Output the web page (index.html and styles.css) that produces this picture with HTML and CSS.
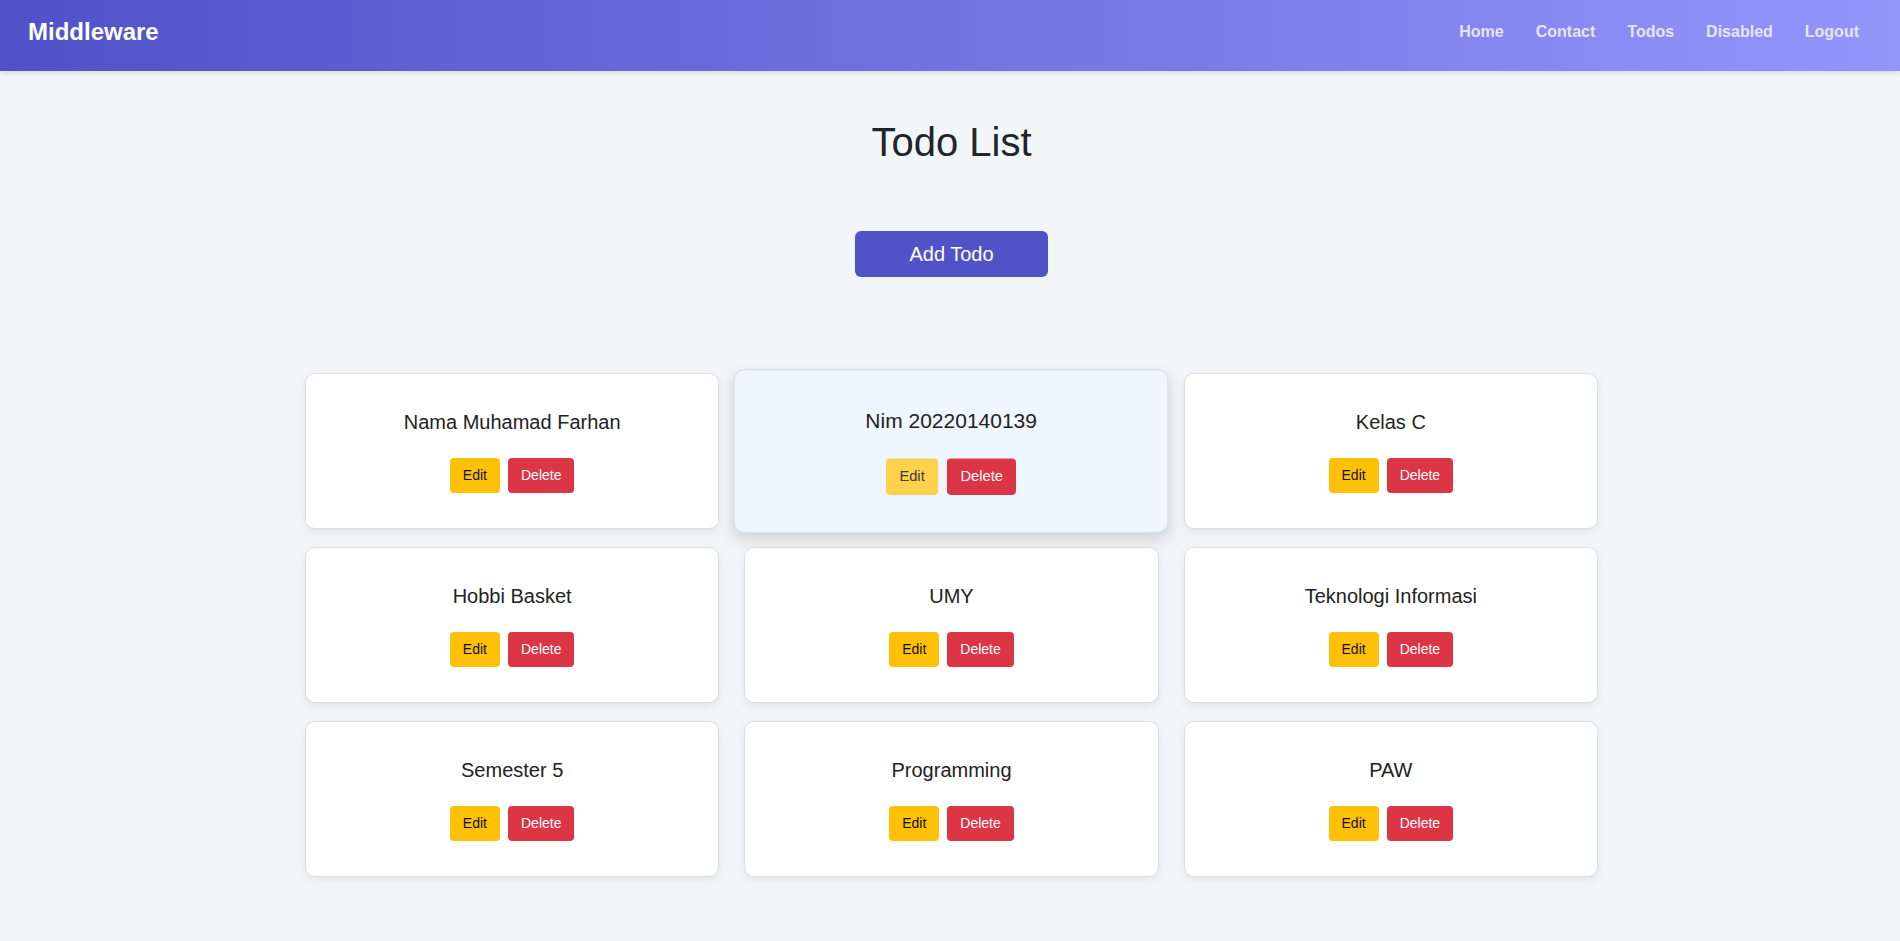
FILE: index.html
```html
<!DOCTYPE html>
<html lang="id">
<head>
<meta charset="utf-8">
<title>Todo List</title>
<link rel="stylesheet" href="styles.css">
</head>
<body>
<nav class="navbar">
  <a class="brand" href="#">Middleware</a>
  <ul class="nav-links">
    <li><a href="#">Home</a></li>
    <li><a href="#">Contact</a></li>
    <li><a href="#">Todos</a></li>
    <li><a href="#">Disabled</a></li>
    <li><a href="#">Logout</a></li>
  </ul>
</nav>
<main class="main">
  <h1 class="page-title">Todo List</h1>
  <div class="add-wrap"><button class="btn-add">Add Todo</button></div>
  <div class="todo-grid">
    <div class="todo-card">
      <h3 class="todo-title">Nama Muhamad Farhan</h3>
      <div class="todo-actions"><button class="btn btn-edit">Edit</button><button class="btn btn-delete">Delete</button></div>
    </div>
    <div class="todo-card is-hover">
      <h3 class="todo-title">Nim 20220140139</h3>
      <div class="todo-actions"><button class="btn btn-edit is-hover">Edit</button><button class="btn btn-delete">Delete</button></div>
    </div>
    <div class="todo-card">
      <h3 class="todo-title">Kelas C</h3>
      <div class="todo-actions"><button class="btn btn-edit">Edit</button><button class="btn btn-delete">Delete</button></div>
    </div>
    <div class="todo-card">
      <h3 class="todo-title">Hobbi Basket</h3>
      <div class="todo-actions"><button class="btn btn-edit">Edit</button><button class="btn btn-delete">Delete</button></div>
    </div>
    <div class="todo-card">
      <h3 class="todo-title">UMY</h3>
      <div class="todo-actions"><button class="btn btn-edit">Edit</button><button class="btn btn-delete">Delete</button></div>
    </div>
    <div class="todo-card">
      <h3 class="todo-title">Teknologi Informasi</h3>
      <div class="todo-actions"><button class="btn btn-edit">Edit</button><button class="btn btn-delete">Delete</button></div>
    </div>
    <div class="todo-card">
      <h3 class="todo-title">Semester 5</h3>
      <div class="todo-actions"><button class="btn btn-edit">Edit</button><button class="btn btn-delete">Delete</button></div>
    </div>
    <div class="todo-card">
      <h3 class="todo-title">Programming</h3>
      <div class="todo-actions"><button class="btn btn-edit">Edit</button><button class="btn btn-delete">Delete</button></div>
    </div>
    <div class="todo-card">
      <h3 class="todo-title">PAW</h3>
      <div class="todo-actions"><button class="btn btn-edit">Edit</button><button class="btn btn-delete">Delete</button></div>
    </div>
  </div>
</main>
</body>
</html>
```
FILE: styles.css
```css
* { box-sizing: border-box; }

html, body {
  margin: 0;
  padding: 0;
}

body {
  font-family: "Liberation Sans", Arial, sans-serif;
  background: #f3f6f9;
  color: #212529;
  min-height: 941px;
}

.navbar {
  display: flex;
  align-items: center;
  justify-content: space-between;
  height: 71px;
  padding: 18px 41px 25px 28px;
  background: linear-gradient(90deg, #4f51c8 0%, #9296fb 100%);
  box-shadow: 0 2px 6px rgba(0, 0, 0, 0.12);
}

.brand {
  color: #ffffff;
  font-size: 24px;
  line-height: 28px;
  font-weight: 700;
  text-decoration: none;
}

.nav-links {
  display: flex;
  align-items: center;
  gap: 32px;
  list-style: none;
  margin: 0;
  padding: 0;
}

.nav-links a {
  color: #e6e6fb;
  font-size: 16px;
  font-weight: 700;
  text-decoration: none;
}

.main {
  padding: 48px 0 0 3px;
}

.page-title {
  margin: 0;
  text-align: center;
  font-size: 40px;
  line-height: 46px;
  font-weight: 400;
  color: #212529;
}

.add-wrap {
  display: flex;
  justify-content: center;
  margin-top: 66px;
}

.btn-add {
  font-family: inherit;
  font-size: 20px;
  line-height: 22px;
  padding: 12px 54px;
  border: none;
  border-radius: 6px;
  background: #4f53c7;
  color: #ffffff;
  cursor: pointer;
}

.todo-grid {
  display: grid;
  grid-template-columns: repeat(3, 1fr);
  column-gap: 25px;
  row-gap: 18px;
  width: 1293px;
  margin: 96px auto 0;
}

.todo-card {
  background: #ffffff;
  border: 1px solid #dcdfe3;
  border-radius: 10px;
  box-shadow: 0 3px 8px rgba(0, 0, 0, 0.08);
  padding: 37px 20px 35px;
  text-align: center;
}

.todo-card.is-hover {
  background: #eef6ff;
  transform: scale(1.05);
  box-shadow: 0 6px 14px rgba(0, 0, 0, 0.15);
}

.todo-title {
  margin: 0 0 24px;
  font-size: 20px;
  line-height: 23px;
  font-weight: 400;
  color: #222222;
}

.todo-actions {
  display: flex;
  justify-content: center;
  gap: 8px;
}

.btn {
  font-family: inherit;
  font-size: 14px;
  line-height: 17px;
  padding: 8px 12px;
  border: 1px solid transparent;
  border-radius: 4px;
  cursor: pointer;
}

.btn-edit {
  background: #ffc107;
  color: #111111;
}

.btn-edit.is-hover {
  background: #fed24d;
  color: #3a3a3a;
}

.btn-delete {
  background: #dc3545;
  color: #ffffff;
}
```
